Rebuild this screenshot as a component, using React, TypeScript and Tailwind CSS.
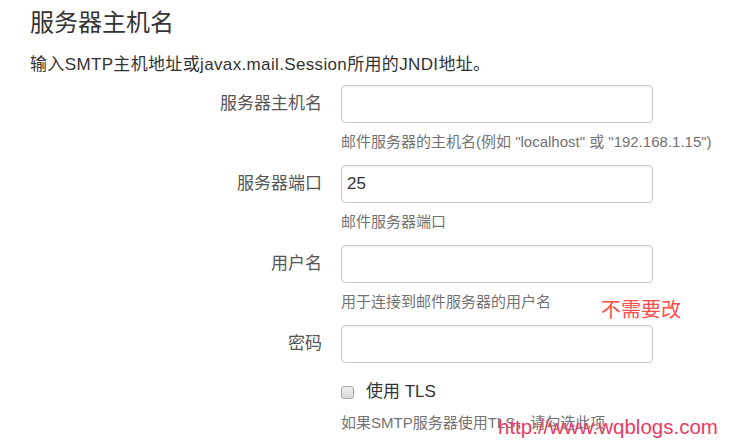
const font = { fontFamily: '"Liberation Sans", "Noto Sans CJK SC", sans-serif' };

type Field = {
  label: string;
  value?: string;
  help?: string;
};

const fields: Field[] = [
  { label: "服务器主机名", help: '邮件服务器的主机名(例如 "localhost" 或 "192.168.1.15")' },
  { label: "服务器端口", value: "25", help: "邮件服务器端口" },
  { label: "用户名", help: "用于连接到邮件服务器的用户名" },
  { label: "密码" },
];

const FormRow = ({ field }: { field: Field }) => {
  return (
    <div className="flex items-start">
      <div className="w-[311px] pr-[19px] h-[38px] flex items-center justify-end text-[17px] leading-[24px] text-[#555]">
        {field.label}
      </div>
      <div className="flex flex-col">
        <div className="w-[312px] h-[38px] border border-[#ccc] rounded-[4px] bg-white shadow-[inset_0_1px_2px_rgba(0,0,0,0.08)] flex items-center px-[5px] text-[17px] text-[#333]">
          {field.value}
        </div>
        {field.help && (
          <div className="mt-[9px] mb-[13px] text-[15px] leading-[20px] text-[#737373] whitespace-nowrap">
            {field.help}
          </div>
        )}
      </div>
    </div>
  );
};

export default function App() {
  return (
    <div className="relative w-[729px] h-[443px] overflow-hidden bg-white" style={font}>
      <div className="pl-[30px]">
        <h3 className="mt-[8px] text-[24px] leading-[30px] text-[#333]">服务器主机名</h3>
        <p className="mt-[16px] text-[17px] leading-[22px] tracking-[0.35px] text-[#333] whitespace-nowrap">
          输入SMTP主机地址或javax.mail.Session所用的JNDI地址。
        </p>
      </div>

      <div className="pl-[30px] mt-[9px] flex flex-col">
        {fields.map((f) => (
          <FormRow key={f.label} field={f} />
        ))}

        <div className="ml-[311px] mt-[17px] flex flex-col">
          <div className="flex items-center h-[24px]">
            <span className="w-[13px] h-[13px] rounded-[3px] border border-[#a6a6a6] bg-gradient-to-b from-[#eeeeee] to-[#d9d9d9]" />
            <span className="ml-[12px] text-[17px] leading-[24px] text-[#333]">使用 TLS</span>
          </div>
          <div className="mt-[9px] text-[15px] leading-[20px] text-[#737373] whitespace-nowrap">
            如果SMTP服务器使用TLS，请勾选此项
          </div>
        </div>
      </div>

      {/* annotations laid over the screenshot */}
      <div className="absolute left-[601px] top-[297px] text-[20px] leading-[26px] text-[#ff4d4d]">
        不需要改
      </div>
      <div className="absolute left-[498px] top-[414px] text-[20.5px] leading-[26px] text-[#ea3b62]">
        http://www.wqblogs.com
      </div>
    </div>
  );
}
